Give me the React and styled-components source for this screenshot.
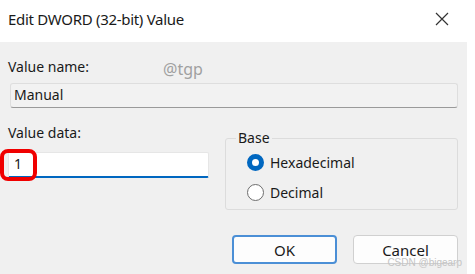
import React from "react";
import styled, { createGlobalStyle } from "styled-components";

const GlobalStyle = createGlobalStyle`
  html, body {
    margin: 0;
    padding: 0;
    background: #ffffff;
  }
  body {
    font-family: "Noto Sans", "Open Sans", sans-serif;
  }
`;

const Window = styled.div`
  position: relative;
  width: 467px;
  height: 274px;
  background: #f0f0f0;
  overflow: hidden;
`;

const TitleBar = styled.div`
  height: 42px;
  background: #ffffff;
  display: flex;
  align-items: center;
  justify-content: space-between;
  padding: 0 8px 4px 8px;
  box-sizing: border-box;
`;

const Title = styled.span`
  font-size: 15px;
  color: #1a1a1a;
  letter-spacing: -0.3px;
`;

const CloseButton = styled.button`
  width: 30px;
  height: 30px;
  border: none;
  background: transparent;
  display: flex;
  align-items: center;
  justify-content: center;
  padding: 0;
  margin-right: 2px;
`;

const Body = styled.div`
  padding: 16px 9px 0 8px;
  display: flex;
  flex-direction: column;
`;

const Label = styled.div`
  font-size: 14px;
  line-height: 18px;
  color: #1a1a1a;
  letter-spacing: 0;
`;

const NameField = styled.div`
  margin: 7px 0 0 2px;
  height: 25px;
  box-sizing: border-box;
  border: 1px solid #dedede;
  border-bottom-color: #9a9a9a;
  border-radius: 3px;
  background: #f2f2f2;
  font-size: 14px;
  line-height: 22px;
  padding-left: 3px;
  color: #1a1a1a;
`;

const Row = styled.div`
  display: flex;
  gap: 16px;
  margin-top: 16px;
`;

const DataColumn = styled.div`
  position: relative;
  width: 201px;
  display: flex;
  flex-direction: column;
`;

const DataField = styled.div`
  margin-top: 10px;
  height: 26px;
  box-sizing: border-box;
  background: #ffffff;
  border: 1px solid #e6e6e6;
  border-bottom: 2px solid #0067c0;
  border-radius: 2px;
  font-size: 14px;
  line-height: 22px;
  padding-left: 5px;
  color: #1a1a1a;
`;

const Highlight = styled.div`
  position: absolute;
  left: -8px;
  top: 25px;
  width: 37px;
  height: 32px;
  box-sizing: border-box;
  border: 4px solid #f00000;
  border-radius: 8px;
`;

const Group = styled.fieldset`
  flex: 1;
  margin: 7px 0 0 0;
  padding: 9px 0 0 0;
  height: 79px;
  box-sizing: border-box;
  border: 1px solid #dcdcdc;
  border-radius: 3px;
  display: flex;
  flex-direction: column;
  gap: 13px;
`;

const Legend = styled.legend`
  font-size: 14px;
  line-height: 14px;
  padding: 0 2px;
  margin-left: 10px;
  color: #1a1a1a;
`;

const RadioRow = styled.div`
  display: flex;
  align-items: center;
  gap: 6px;
  padding-left: 21px;
  font-size: 14px;
  line-height: 17px;
  color: #1a1a1a;
`;

const RadioDot = styled.span`
  width: 17px;
  height: 17px;
  box-sizing: border-box;
  border-radius: 50%;
  border: ${(p) => (p.checked ? "5px solid #0067c0" : "1px solid #6e6e6e")};
  background: #ffffff;
`;

const Buttons = styled.div`
  display: flex;
  justify-content: flex-end;
  gap: 16px;
  margin-top: 25px;
`;

const Button = styled.button`
  width: 105px;
  height: 29px;
  box-sizing: border-box;
  border-radius: 4px;
  background: #fdfdfd;
  border: ${(p) => (p.primary ? "2px solid #4b8fd6" : "1px solid #d0d0d0")};
  font-family: "Noto Sans", "Open Sans", sans-serif;
  font-size: 15px;
  color: #1a1a1a;
  padding: 0;
`;

const Watermark = styled.span`
  position: absolute;
  left: 163px;
  top: 58px;
  font-size: 16px;
  color: #a0a0a0;
`;

const Credit = styled.span`
  position: absolute;
  right: 5px;
  bottom: 6px;
  font-family: "Liberation Sans", sans-serif;
  font-size: 10px;
  color: #c4c4c4;
`;

export default function App() {
  return (
    <>
      <GlobalStyle />
      <Window>
        <TitleBar>
          <Title>Edit DWORD (32-bit) Value</Title>
          <CloseButton aria-label="Close">
            <svg width="14" height="14" viewBox="0 0 14 14">
              <path d="M1 1 L13 13 M13 1 L1 13" stroke="#333" strokeWidth="1.2" />
            </svg>
          </CloseButton>
        </TitleBar>
        <Body>
          <Label>Value name:</Label>
          <NameField>Manual</NameField>
          <Row>
            <DataColumn>
              <Label>Value data:</Label>
              <DataField>1</DataField>
              <Highlight />
            </DataColumn>
            <Group>
              <Legend>Base</Legend>
              <RadioRow>
                <RadioDot checked />
                Hexadecimal
              </RadioRow>
              <RadioRow>
                <RadioDot />
                Decimal
              </RadioRow>
            </Group>
          </Row>
          <Buttons>
            <Button primary>OK</Button>
            <Button>Cancel</Button>
          </Buttons>
        </Body>
        <Watermark>@tgp</Watermark>
        <Credit>CSDN @bigearp</Credit>
      </Window>
    </>
  );
}
